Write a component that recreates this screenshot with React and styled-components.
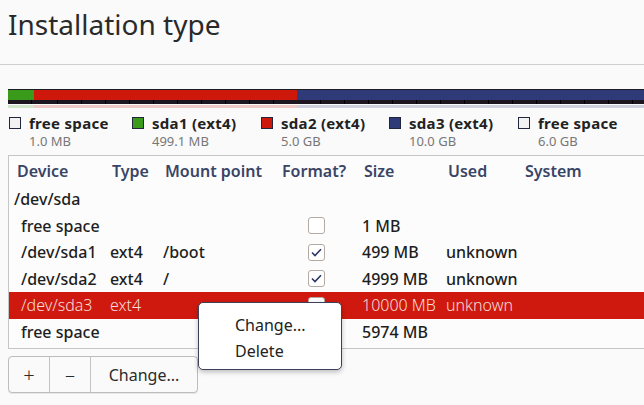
import React from 'react'
import styled, { createGlobalStyle } from 'styled-components'

const segments = [
    { color: '#3a9a1a', width: 26 },
    { color: '#cf180c', width: 263 },
    { color: '#2f3a78', width: 400 },
]

const legend = [
    { label: 'free space', size: '1.0 MB', color: '#f2f2f2', w: 123 },
    { label: 'sda1 (ext4)', size: '499.1 MB', color: '#3a9a1a', w: 129 },
    { label: 'sda2 (ext4)', size: '5.0 GB', color: '#cf180c', w: 128 },
    { label: 'sda3 (ext4)', size: '10.0 GB', color: '#2f3a78', w: 129 },
    { label: 'free space', size: '6.0 GB', color: '#f2f2f2', w: 129 },
]

const rows = [
    { device: '/dev/sda', top: true },
    { device: 'free space', format: false, size: '1 MB' },
    { device: '/dev/sda1', type: 'ext4', mount: '/boot', format: true, size: '499 MB', used: 'unknown' },
    { device: '/dev/sda2', type: 'ext4', mount: '/', format: true, size: '4999 MB', used: 'unknown' },
    { device: '/dev/sda3', type: 'ext4', format: true, size: '10000 MB', used: 'unknown', selected: true },
    { device: 'free space', size: '5974 MB' },
]

function Check({ checked }) {
    return (
        <CheckBox>
            {checked && (
                <svg width="11" height="9" viewBox="0 0 11 9">
                    <path d="M1 4.5 L4 7.5 L10 1.2" fill="none" stroke="#2a3564" strokeWidth="1.6" />
                </svg>
            )}
        </CheckBox>
    )
}

function App() {
    return (
        <Page>
            <GlobalStyle />
            <Header>
                <Title>Installation type</Title>
            </Header>
            <Bar>
                {segments.map((s, i) => (
                    <Segment key={i} color={s.color} style={{ flexBasis: s.width }} />
                ))}
            </Bar>
            <Legend>
                {legend.map((l, i) => (
                    <LegendItem key={i} w={l.w}>
                        <Swatch color={l.color} />
                        <div>
                            <LegendLabel>{l.label}</LegendLabel>
                            <LegendSize>{l.size}</LegendSize>
                        </div>
                    </LegendItem>
                ))}
            </Legend>
            <Table>
                <HeadRow>
                    <HeadCell>Device</HeadCell>
                    <HeadCell>Type</HeadCell>
                    <HeadCell>Mount point</HeadCell>
                    <HeadCell>Format?</HeadCell>
                    <HeadCell>Size</HeadCell>
                    <HeadCell>Used</HeadCell>
                    <HeadCell>System</HeadCell>
                </HeadRow>
                {rows.map((r, i) => (
                    <Row key={i} selected={r.selected}>
                        <DeviceCell top={r.top}>{r.device}</DeviceCell>
                        <Cell>{r.type}</Cell>
                        <Cell>{r.mount}</Cell>
                        <FormatCell>{r.format !== undefined && <Check checked={r.format} />}</FormatCell>
                        <Cell>{r.size}</Cell>
                        <Cell>{r.used}</Cell>
                        <Cell />
                    </Row>
                ))}
            </Table>
            <Buttons>
                <ToolButton w={40}>+</ToolButton>
                <ToolButton w={40}>–</ToolButton>
                <ToolButton w={106} text>Change...</ToolButton>
            </Buttons>
            <Menu>
                <MenuItem>Change...</MenuItem>
                <MenuItem>Delete</MenuItem>
            </Menu>
        </Page>
    )
}

export default App

const GlobalStyle = createGlobalStyle`
    html, body {
        margin: 0;
        background: #fafafa;
        overflow: hidden;
    }
    body {
        font-family: "Noto Sans", "DejaVu Sans", sans-serif;
        color: #2b2b2b;
    }
`

const Page = styled.div`
    position: relative;
    width: 644px;
    height: 405px;
    overflow: hidden;
`

const Header = styled.div`
    height: 65px;
    padding: 0 8px;
    border-bottom: 1px solid #cfcfcf;
    box-sizing: border-box;
`

const Title = styled.h1`
    margin: 0;
    padding-top: 10px;
    font-size: 28px;
    line-height: 1;
    font-weight: 400;
    color: #2a2a2a;
`

const Bar = styled.div`
    display: flex;
    margin: 24px 0 0 8px;
    height: 18px;
`

const Segment = styled.div`
    flex-shrink: 0;
    position: relative;
    height: 15px;
    box-sizing: border-box;
    border-top: 1px solid #1c1c24;
    background:
        repeating-linear-gradient(90deg, transparent 0 23px, #000 23px 24px) bottom / 100% 4px no-repeat,
        linear-gradient(${p => p.color} 0 10px, #1d1620 10px);
    &::after {
        content: '';
        position: absolute;
        left: 0;
        right: 0;
        top: 15px;
        height: 3px;
        background: ${p => p.color};
        opacity: 0.22;
    }
`

const Legend = styled.div`
    display: flex;
    margin-top: 7px;
    padding-left: 9px;
`

const LegendItem = styled.div`
    display: flex;
    gap: 8px;
    flex: 0 0 ${p => p.w}px;
`

const Swatch = styled.div`
    width: 12px;
    height: 12px;
    margin-top: 3px;
    border: 1px solid #22263a;
    background: ${p => p.color};
    box-sizing: border-box;
`

const LegendLabel = styled.div`
    font-size: 15px;
    line-height: 18px;
    letter-spacing: 0.3px;
    font-weight: 700;
    color: #222;
    white-space: nowrap;
`

const LegendSize = styled.div`
    margin-top: 1px;
    font-size: 13px;
    line-height: 17px;
    color: #777;
`

const Table = styled.div`
    margin: 5px 0 0 8px;
    width: 660px;
    border: 1px solid #c6c6c6;
    border-right: none;
    padding-bottom: 3px;
    background: #fcfcfc;
`

const columns = '95px 53px 117px 82px 84px 77px 1fr'

const HeadRow = styled.div`
    display: grid;
    grid-template-columns: ${columns};
    height: 30px;
    align-items: center;
`

const HeadCell = styled.div`
    padding-left: 8px;
    font-size: 16px;
    font-weight: 600;
    color: #3a4566;
    white-space: nowrap;
`

const Row = styled.div`
    display: grid;
    grid-template-columns: ${columns};
    height: 26.5px;
    align-items: center;
    background: ${p => (p.selected ? '#d0190e' : 'transparent')};
    color: ${p => (p.selected ? '#f3dcd9' : '#1e1e1e')};
    font-weight: ${p => (p.selected ? 300 : 500)};
`

const Cell = styled.div`
    padding-left: 6px;
    font-size: 16px;
    white-space: nowrap;
`

const DeviceCell = styled(Cell)`
    padding-left: ${p => (p.top ? 5 : 12)}px;
`

const FormatCell = styled.div`
    padding-left: 34px;
    display: flex;
`

const CheckBox = styled.div`
    width: 17px;
    height: 17px;
    box-sizing: border-box;
    border: 1px solid #b4aaa4;
    border-radius: 3px;
    background: #fff;
    display: flex;
    align-items: center;
    justify-content: center;
`

const Buttons = styled.div`
    display: inline-flex;
    margin: 7px 0 0 8px;
    height: 37px;
    border: 1px solid #bdbdbd;
    border-radius: 4px;
    box-sizing: border-box;
    background: #fafafa;
    box-shadow: 0 1px 0 rgba(0, 0, 0, 0.08);
`

const ToolButton = styled.div`
    width: ${p => p.w}px;
    display: flex;
    align-items: center;
    justify-content: center;
    font-size: ${p => (p.text ? 16 : 20)}px;
    font-weight: ${p => (p.text ? 400 : 300)};
    color: #2b2b2b;
    & + & {
        border-left: 1px solid #c4c4c4;
    }
`

const Menu = styled.div`
    position: absolute;
    left: 198px;
    top: 302px;
    width: 144px;
    height: 68px;
    box-sizing: border-box;
    padding-top: 9px;
    background: #fff;
    border: 1px solid #3e3f58;
    border-radius: 5px;
    box-shadow: 0 2px 5px rgba(0, 0, 0, 0.25);
`

const MenuItem = styled.div`
    padding-left: 36px;
    font-size: 16px;
    line-height: 26px;
    color: #222;
`
